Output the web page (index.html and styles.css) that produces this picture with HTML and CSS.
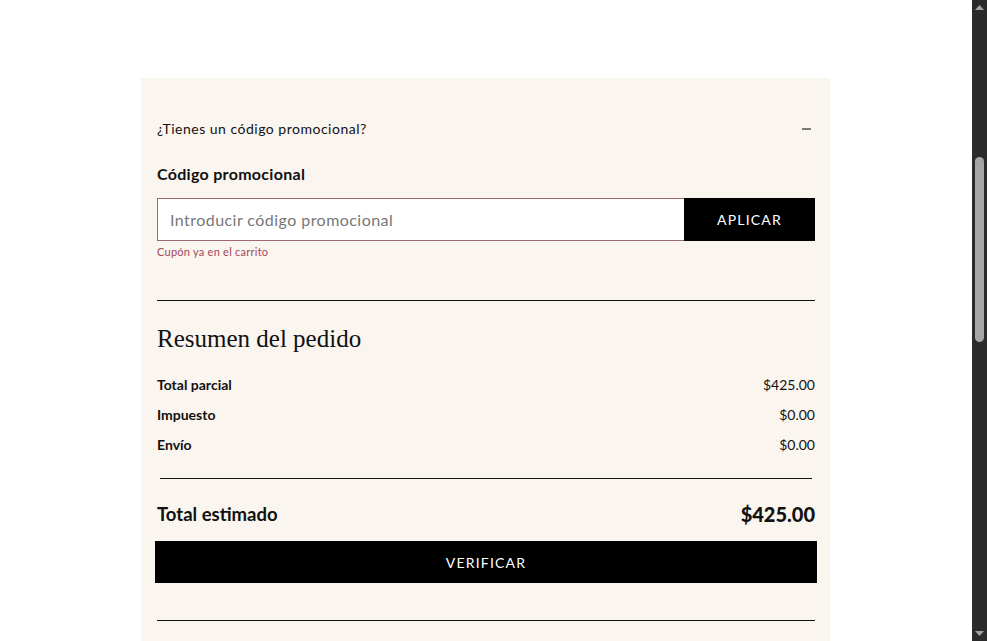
FILE: index.html
```html
<!DOCTYPE html>
<html lang="es">
<head>
<meta charset="utf-8">
<title>Resumen del pedido</title>
<link rel="stylesheet" href="styles.css">
</head>
<body>
<div class="window">
<main class="page">
  <section class="summary">
    <div class="promo-toggle">
      <span>¿Tienes un código promocional?</span>
      <span class="minus" aria-hidden="true"></span>
    </div>
    <label class="promo-label" for="promo">Código promocional</label>
    <form class="promo-form">
      <input id="promo" class="promo-input" type="text" placeholder="Introducir código promocional">
      <button type="button" class="btn-apply">APLICAR</button>
    </form>
    <p class="promo-error">Cupón ya en el carrito</p>
    <hr class="rule rule-top">
    <h2 class="summary-title">Resumen del pedido</h2>
    <div class="line"><span class="line-label">Total parcial</span><span class="line-value">$425.00</span></div>
    <div class="line"><span class="line-label">Impuesto</span><span class="line-value">$0.00</span></div>
    <div class="line"><span class="line-label">Envío</span><span class="line-value">$0.00</span></div>
    <hr class="rule rule-inset">
    <div class="total"><span class="total-label">Total estimado</span><span class="total-value">$425.00</span></div>
    <button type="button" class="btn-checkout">VERIFICAR</button>
    <hr class="rule rule-bottom">
  </section>
</main>
<div class="scrollbar" aria-hidden="true">
  <div class="sb-arrow"><svg width="9" height="5" viewBox="0 0 9 5"><polygon points="0,5 9,5 4.5,0" fill="#a3a3a3"/></svg></div>
  <div class="sb-track"><div class="sb-thumb"></div></div>
  <div class="sb-arrow"><svg width="9" height="5" viewBox="0 0 9 5"><polygon points="0,0 9,0 4.5,5" fill="#a3a3a3"/></svg></div>
</div>
</div>
</body>
</html>
```

FILE: styles.css
```css
html {
  background: #ffffff;
}
body {
  margin: 0;
  height: 100vh;
  overflow: hidden;
  font-family: "Lato", "Open Sans", sans-serif;
  color: #111;
}
.window {
  display: flex;
  height: 100vh;
}
.page {
  flex: 1;
  min-width: 0;
  overflow: hidden;
  padding: 78px 0 0 141px;
}
.scrollbar {
  width: 15px;
  flex: none;
  background: #2b2b2b;
  display: flex;
  flex-direction: column;
  align-items: center;
}
.sb-arrow {
  height: 15px;
  width: 15px;
  display: flex;
  align-items: center;
  justify-content: center;
}
.sb-track {
  flex: 1;
  padding-top: 142px;
}
.sb-thumb {
  width: 9px;
  height: 185px;
  border-radius: 5px;
  background: #a6a6a6;
}
.summary {
  width: 658px;
  background: #faf5ef;
  padding: 40px 15px 60px 16px;
}
.promo-toggle {
  display: flex;
  justify-content: space-between;
  align-items: center;
  font-size: 14px;
  letter-spacing: 0.5px;
  line-height: 22px;
}
.minus {
  width: 9px;
  height: 2px;
  background: #7a7a7a;
  margin-right: 4px;
}
.promo-label {
  display: block;
  margin-top: 23px;
  font-size: 16px;
  font-weight: 700;
  letter-spacing: 0.3px;
  line-height: 22px;
}
.promo-form {
  display: flex;
  margin: 13px 0 0;
  height: 43px;
}
.promo-input {
  flex: 1;
  min-width: 0;
  box-sizing: border-box;
  height: 43px;
  border: 1px solid #a0686f;
  border-right: none;
  background: #fff;
  padding: 0 12px;
  font-family: inherit;
  font-size: 16px;
  letter-spacing: 0.45px;
  color: #111;
  outline: none;
}
.promo-input::placeholder {
  color: #777;
}
.btn-apply {
  width: 131px;
  height: 43px;
  border: none;
  background: #000;
  color: #fff;
  font-family: inherit;
  font-size: 14px;
  letter-spacing: 1.2px;
  padding: 0;
}
.promo-error {
  margin: 4px 0 0;
  font-size: 11px;
  letter-spacing: 0.25px;
  line-height: 14px;
  color: #a3475b;
}
.rule {
  border: none;
  height: 1px;
  background: #111;
  margin: 0;
}
.rule-top {
  margin-top: 41px;
}
.summary-title {
  margin: 23px 0 0;
  font-family: "Liberation Serif", "Times New Roman", serif;
  font-weight: 400;
  font-size: 25px;
  line-height: 30px;
}
.line {
  display: flex;
  justify-content: space-between;
  align-items: center;
  height: 30px;
  font-size: 14px;
}
.summary-title + .line {
  margin-top: 15px;
}
.line-label {
  font-weight: 700;
}
.rule-inset {
  margin: 19px 3px 0;
}
.total {
  display: flex;
  justify-content: space-between;
  align-items: center;
  margin-top: 22px;
  height: 26px;
}
.total-label {
  font-size: 18.5px;
  font-weight: 700;
}
.total-value {
  font-size: 20px;
  font-weight: 900;
}
.btn-checkout {
  display: block;
  width: calc(100% + 4px);
  margin: 14px -2px 0;
  height: 42px;
  border: none;
  background: #000;
  color: #fff;
  font-family: inherit;
  font-size: 14px;
  letter-spacing: 1.2px;
  padding-top: 1px;
}
.rule-bottom {
  margin-top: 37px;
}
```
